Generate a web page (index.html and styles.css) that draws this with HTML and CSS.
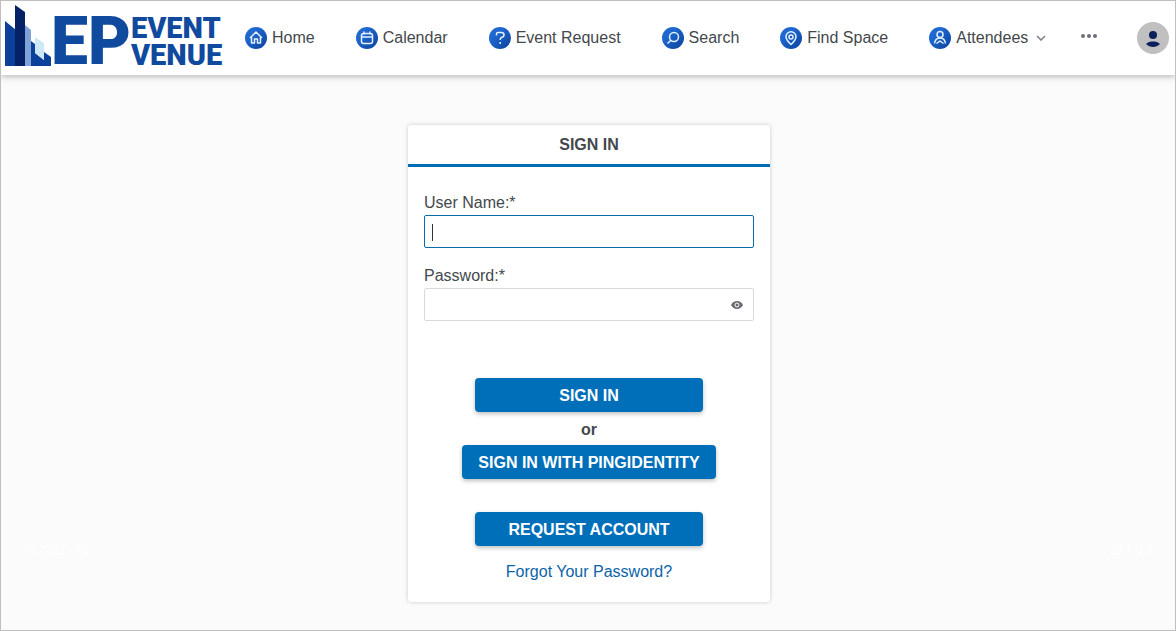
FILE: index.html
```html
<!DOCTYPE html>
<html lang="en">

<head>
	<meta charset="UTF-8">
	<meta name="viewport" content="width=device-width, initial-scale=1">
	<title>Sign In</title>
	<link rel="stylesheet" href="styles.css">
</head>

<body>
	<header class="topbar">
		<a href="#" class="logo">
			<svg class="logo-mark" width="46" height="62" viewBox="0 0 46 62" aria-hidden="true">
				<path fill="#0b419a" d="M0 16l11 9v36H0z" />
				<path fill="#0b419a" d="M26 36l4 3v9l9 7v-8l7 5v9H26z" />
				<path fill="#7fa3d8" d="M20 20l6 5v36h-6z" />
				<path fill="#cfe8f7" d="M30 32l9 6v17l-9-7z" />
				<path fill="#062266" d="M10 0l10 7v54H10z" />
			</svg>
			<span class="logo-ep">EP</span>
			<span class="logo-name"><span>EVENT</span><span>VENUE</span></span>
		</a>

		<nav class="menu">
			<a href="#">
				<svg class="icon" viewBox="0 0 22 22" aria-hidden="true">
					<defs>
						<linearGradient id="disc" x1="0" y1="0" x2="1" y2="1">
							<stop offset="0.3" stop-color="#1f68d0" />
							<stop offset="1" stop-color="#0c429c" />
						</linearGradient>
					</defs>
					<circle class="disc" cx="11" cy="11" r="11" />
					<path d="M5 11l6-6 6 6M6.500 9.500V16H9.500v-4h3v4h3V9.500" />
				</svg>
				Home
			</a>
			<a href="#">
				<svg class="icon" viewBox="0 0 22 22" aria-hidden="true">
					<circle class="disc" cx="11" cy="11" r="11" />
					<rect x="5.500" y="6.500" width="11" height="10" rx="2" />
					<path d="M5.500 10h11M8 4.500V7.500M14 4.500V7.500" />
				</svg>
				Calendar
			</a>
			<a href="#">
				<svg class="icon" viewBox="0 0 22 22" aria-hidden="true">
					<circle class="disc" cx="11" cy="11" r="11" />
					<path d="M7.500 8.500V7q0-1.500 1.500-1.500h3.500q2.500 0 2.500 2.300 0 2-2.500 2.700-1.300.4-1.300 2.500M11.200 15v2" />
				</svg>
				Event Request
			</a>
			<a href="#">
				<svg class="icon" viewBox="0 0 22 22" aria-hidden="true">
					<circle class="disc" cx="11" cy="11" r="11" />
					<circle cx="12" cy="10" r="4.500" />
					<path d="M8.800 13.200L5.500 16.500" />
				</svg>
				Search
			</a>
			<a href="#">
				<svg class="icon" viewBox="0 0 22 22" aria-hidden="true">
					<circle class="disc" cx="11" cy="11" r="11" />
					<path d="M11 17.500C8 14.800 6 12.500 6 9.800a5 5 0 0 1 10 0c0 2.700-2 5-5 7.700z" />
					<circle cx="11" cy="10" r="2" />
				</svg>
				Find Space
			</a>
			<a href="#">
				<svg class="icon" viewBox="0 0 22 22" aria-hidden="true">
					<circle class="disc" cx="11" cy="11" r="11" />
					<circle cx="11" cy="7.500" r="3" />
					<path d="M5.500 16.500c.5-3.800 2.500-5.500 5.500-5.500s5 1.700 5.500 5.500M7.500 16.500l3.500-2.500 3.500 2.500" />
				</svg>
				Attendees
				<svg class="chevron" width="10" height="6" viewBox="0 0 10 6" aria-hidden="true">
					<path d="M1 1l4 4 4-4" />
				</svg>
			</a>
		</nav>

		<button type="button" class="more" aria-label="More">
			<svg width="16" height="4" viewBox="0 0 16 4" aria-hidden="true">
				<circle cx="2" cy="2" r="2" />
				<circle cx="8" cy="2" r="2" />
				<circle cx="14" cy="2" r="2" />
			</svg>
		</button>
		<button type="button" class="avatar" aria-label="Account">
			<svg width="32" height="32" viewBox="0 0 32 32" aria-hidden="true">
				<circle cx="16" cy="13" r="4" />
				<path d="M9 22c2-2 4.500-2.500 7-2.500s5 .5 7 2.500c-2 2-4.500 3-7 3s-5-1-7-3z" />
			</svg>
		</button>
	</header>

	<main class="content">
		<small class="copyright">© 2022 - Pc</small>

		<form class="card" action="#" method="post">
			<h1>SIGN IN</h1>
			<div class="card-body">
				<label for="username">User Name:*</label>
				<input type="text" id="username" name="username" class="active">

				<label for="password">Password:*</label>
				<div class="password">
					<input type="password" id="password" name="password">
					<button type="button" aria-label="Show password">
						<svg width="12" height="8" viewBox="0 0 12 8" aria-hidden="true">
							<path fill="#666a70" d="M0 4C1.500 1.300 3.500 0 6 0s4.500 1.300 6 4c-1.500 2.700-3.500 4-6 4S1.500 6.700 0 4z" />
							<circle cx="6" cy="4" r="2" fill="none" stroke="#fff" />
						</svg>
					</button>
				</div>

				<div class="actions">
					<button type="submit" class="btn">SIGN IN</button>
					<span class="or">or</span>
					<button type="button" class="btn btn-wide">SIGN IN WITH PINGIDENTITY</button>
					<button type="button" class="btn btn-request">REQUEST ACCOUNT</button>
					<a href="#">Forgot Your Password?</a>
				</div>
			</div>
		</form>

		<small class="version">23.1.0.1</small>
	</main>
</body>

</html>
```

FILE: styles.css
```css
* {
	box-sizing: border-box;
}

body {
	margin: 0;
	min-height: 100vh;
	display: flex;
	flex-direction: column;
	border: 1px solid #bfbfbf;
	background: #fbfbfb;
	color: #44484c;
	font: 16px/20px "Liberation Sans", Arial, sans-serif;
}

button {
	border: 0;
	padding: 0;
	background: none;
	font: inherit;
	cursor: pointer;
}

svg {
	display: block;
}

/* top bar */
.topbar {
	display: flex;
	align-items: center;
	height: 74px;
	padding: 0 6px 0 4px;
	background: #fff;
	box-shadow: 0 2px 6px rgba(0, 0, 0, 0.25);
}

.logo {
	display: flex;
	align-items: center;
	width: 240px;
	padding-top: 8px;
	color: #0f4a9f;
	font-family: Roboto, sans-serif;
	font-weight: 900;
	text-decoration: none;
}

.logo-mark {
	margin-bottom: 12px;
}

.logo-ep {
	font-size: 66px;
	line-height: 70px;
}

.logo-name {
	display: flex;
	flex-direction: column;
	font-size: 29px;
	line-height: 27px;
}

.menu {
	display: flex;
	gap: 41px;
}

.menu a {
	display: flex;
	align-items: center;
	gap: 5px;
	color: #44484c;
	text-decoration: none;
	white-space: nowrap;
}

.icon {
	width: 22px;
	height: 22px;
	fill: none;
	stroke: #e4f1ff;
	stroke-width: 1.5;
	stroke-linejoin: round;
}

.icon .disc {
	fill: url(#disc);
	stroke: none;
}

.chevron {
	margin-left: 3px;
	fill: none;
	stroke: #7a7f84;
	stroke-width: 1.5;
}

.more {
	margin: 0 auto 4px 35px;
	fill: #6a7077;
}

.avatar {
	border-radius: 50%;
	background: #c0c0c0;
	fill: #0b1f5c;
}

/* sign in */
.content {
	flex: 1;
	display: grid;
	grid-template-columns: 1fr 362px 1fr;
	align-items: start;
	padding: 50px 22px 28px 24px;
}

.copyright,
.version {
	align-self: end;
	margin-bottom: 42px;
	color: #fff;
	font: 12px/20px "Open Sans", sans-serif;
}

.version {
	text-align: right;
}

.card {
	border-radius: 3px;
	background: #fff;
	box-shadow: 0 0 4px rgba(0, 0, 0, 0.2);
}

.card h1 {
	margin: 0;
	padding: 10px 0 9px;
	border-bottom: 3px solid #006cb5;
	font-size: 16px;
	line-height: 20px;
	text-align: center;
}

.card-body {
	padding: 26px 16px 20px;
}

.card label {
	display: block;
	margin-bottom: 2px;
}

.card input {
	display: block;
	width: 100%;
	height: 33px;
	margin-bottom: 18px;
	padding: 0 7px;
	border: 1px solid #d8dadc;
	border-radius: 2px;
	background: #fff;
	font: inherit;
}

/* text cursor waiting in the first field */
.card input.active {
	border-color: #0a6cab;
	background: linear-gradient(#333, #333) 7px 8px / 1px 17px no-repeat #fff;
}

.password {
	position: relative;
}

.password button {
	position: absolute;
	top: 0;
	right: 11px;
	height: 33px;
}

.actions {
	display: flex;
	flex-direction: column;
	align-items: center;
	margin-top: 57px;
}

.actions a {
	margin-top: 16px;
	color: #0b63a8;
	text-decoration: none;
}

.btn {
	width: 228px;
	height: 34px;
	padding-top: 2px;
	border-radius: 4px;
	background: #006fba;
	box-shadow: 0 2px 4px rgba(0, 0, 0, 0.25);
	color: #fff;
	font-weight: bold;
}

.btn-wide {
	width: auto;
	padding: 2px 16px 0;
}

.btn-request {
	margin-top: 33px;
}

.or {
	padding: 8px 0 5px;
	font-weight: bold;
}
```
